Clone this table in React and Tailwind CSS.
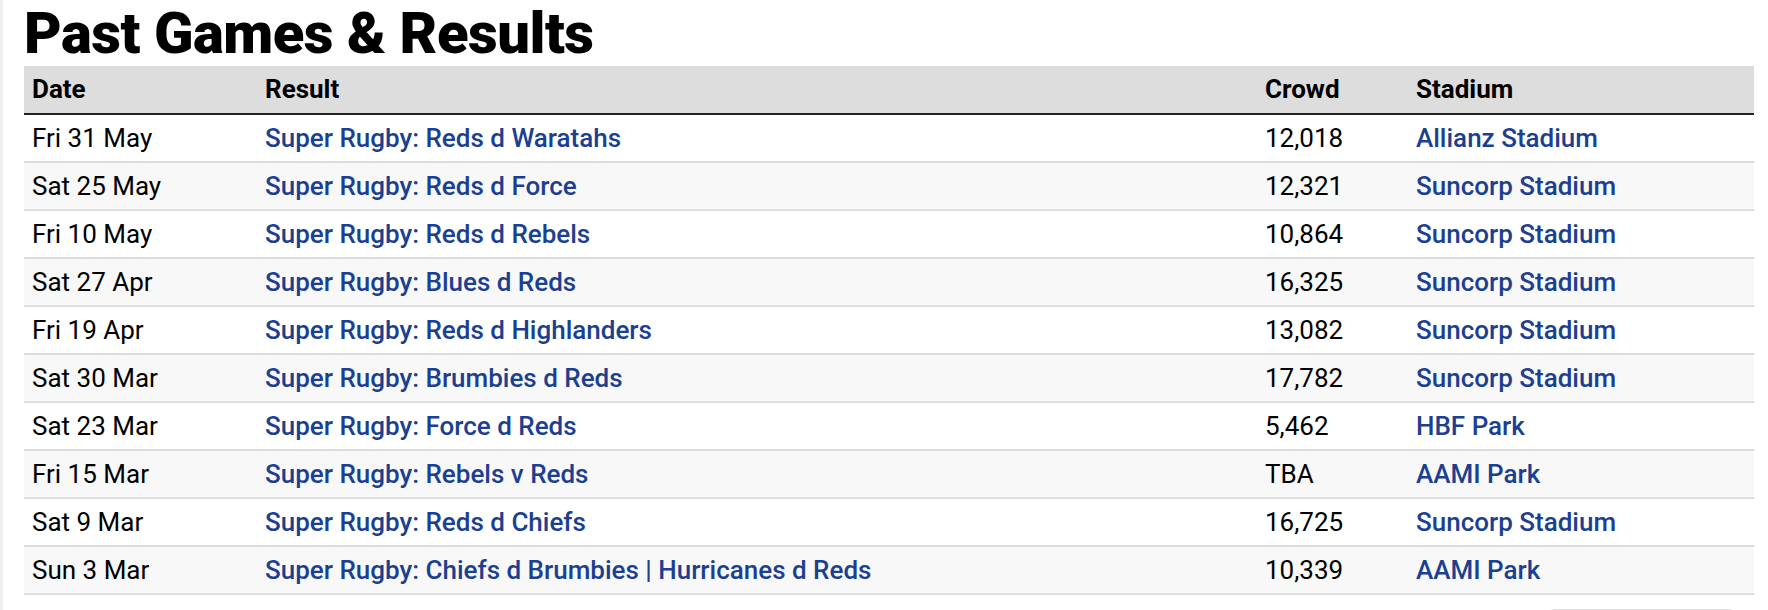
import React from "react";

const games = [
  { date: "Fri 31 May", result: "Super Rugby: Reds d Waratahs", crowd: "12,018", stadium: "Allianz Stadium" },
  { date: "Sat 25 May", result: "Super Rugby: Reds d Force", crowd: "12,321", stadium: "Suncorp Stadium" },
  { date: "Fri 10 May", result: "Super Rugby: Reds d Rebels", crowd: "10,864", stadium: "Suncorp Stadium" },
  { date: "Sat 27 Apr", result: "Super Rugby: Blues d Reds", crowd: "16,325", stadium: "Suncorp Stadium" },
  { date: "Fri 19 Apr", result: "Super Rugby: Reds d Highlanders", crowd: "13,082", stadium: "Suncorp Stadium" },
  { date: "Sat 30 Mar", result: "Super Rugby: Brumbies d Reds", crowd: "17,782", stadium: "Suncorp Stadium" },
  { date: "Sat 23 Mar", result: "Super Rugby: Force d Reds", crowd: "5,462", stadium: "HBF Park" },
  { date: "Fri 15 Mar", result: "Super Rugby: Rebels v Reds", crowd: "TBA", stadium: "AAMI Park" },
  { date: "Sat 9 Mar", result: "Super Rugby: Reds d Chiefs", crowd: "16,725", stadium: "Suncorp Stadium" },
  { date: "Sun 3 Mar", result: "Super Rugby: Chiefs d Brumbies | Hurricanes d Reds", crowd: "10,339", stadium: "AAMI Park" },
];

export default function App() {
  return (
    <div className="flex h-[610px] overflow-hidden bg-white font-['Roboto',sans-serif] text-black">
      {/* grey gutter on the far left */}
      <div className="w-[3px] shrink-0 bg-[#efefef]" />
      <div className="pl-[21px] pr-[14px] w-full">
        <h1 className="h-[66px] text-[58px] font-black leading-[66px] tracking-[-0.5px]">
          Past Games &amp; Results
        </h1>
        <table className="w-[1730px] table-fixed border-collapse text-[26px]">
          <thead>
            <tr className="bg-[#dddddd] border-b-2 border-[#222222]">
              <th className="w-[233px] h-[48px] px-2 text-left font-bold">Date</th>
              <th className="w-[1000px] h-[48px] px-2 text-left font-bold">Result</th>
              <th className="w-[151px] h-[48px] px-2 text-left font-bold">Crowd</th>
              <th className="h-[48px] px-2 text-left font-bold">Stadium</th>
            </tr>
          </thead>
          <tbody>
            {games.map((g, ind) => (
              <tr
                key={g.date}
                className={`border-b-2 border-[#dddddd] ${ind % 2 === 1 ? "bg-[#f8f8f8]" : "bg-white"}`}
              >
                <td className="h-[48px] px-2">{g.date}</td>
                <td className="h-[48px] px-2">
                  <a href="#" className="font-medium text-[#1b3f91]">{g.result}</a>
                </td>
                <td className="h-[48px] px-2">{g.crowd}</td>
                <td className="h-[48px] px-2">
                  <a href="#" className="font-medium text-[#1b3f91]">{g.stadium}</a>
                </td>
              </tr>
            ))}
          </tbody>
        </table>
        <div className="flex justify-end pr-[17px] mt-[14px]">
          <div className="w-[190px] h-[40px] rounded-[8px] border-2 border-[#e0e0e0]" />
        </div>
      </div>
    </div>
  );
}
